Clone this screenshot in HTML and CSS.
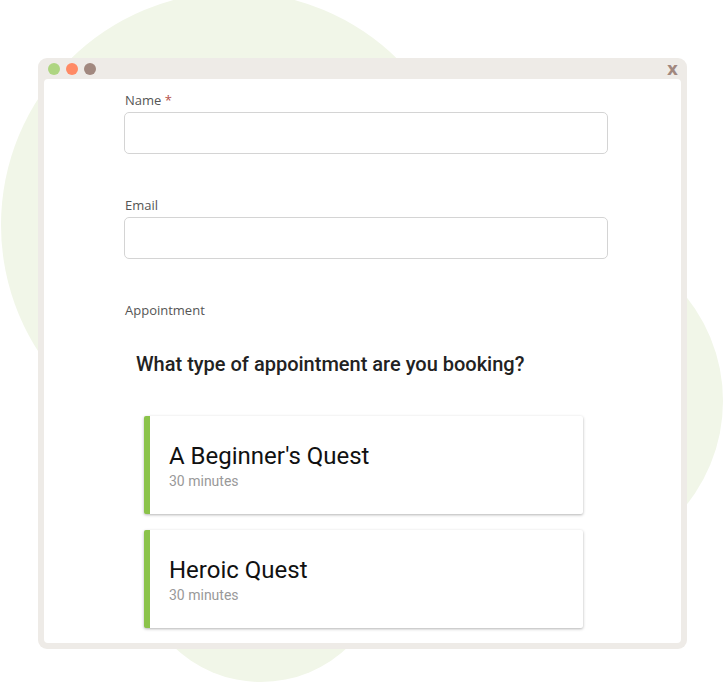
FILE: index.html
```html
<!DOCTYPE html>
<html lang="en">
<head>
    <meta charset="UTF-8">
    <meta name="viewport" content="width=device-width, initial-scale=1.0">
    <title>Booking</title>
    <link rel="stylesheet" href="styles.css">
</head>
<body>
    <div class="stage">
        <div class="blob blob-big"></div>
        <div class="blob blob-right"></div>
        <div class="blob blob-bottom"></div>

        <div class="window">
            <div class="titlebar">
                <div class="dots">
                    <span class="dot green"></span>
                    <span class="dot orange"></span>
                    <span class="dot brown"></span>
                </div>
                <span class="close">x</span>
            </div>

            <div class="content">
                <form class="booking-form">
                    <div class="form-group">
                        <label for="name">Name <span class="req">*</span></label>
                        <input type="text" id="name" name="name">
                    </div>

                    <div class="form-group">
                        <label for="email">Email</label>
                        <input type="text" id="email" name="email">
                    </div>

                    <div class="form-group">
                        <label>Appointment</label>
                    </div>

                    <h2 class="question">What type of appointment are you booking?</h2>

                    <div class="cards">
                        <div class="card">
                            <div class="card-title">A Beginner's Quest</div>
                            <div class="card-time">30 minutes</div>
                        </div>
                        <div class="card">
                            <div class="card-title">Heroic Quest</div>
                            <div class="card-time">30 minutes</div>
                        </div>
                    </div>
                </form>
            </div>
        </div>
    </div>
</body>
</html>
```

FILE: styles.css
```css
body {
    margin: 0;
    padding: 0;
    background-color: #ffffff;
    font-family: "Open Sans", sans-serif;
}

.stage {
    position: relative;
    width: 726px;
    height: 684px;
    overflow: hidden;
    padding-top: 58px;
    box-sizing: border-box;
}

.blob {
    position: absolute;
    background-color: #f1f6e8;
    border-radius: 50%;
}

.blob-big {
    left: 1px;
    top: -8px;
    width: 466px;
    height: 466px;
}

.blob-right {
    left: 391px;
    top: 235px;
    width: 332px;
    height: 332px;
}

.blob-bottom {
    left: 135px;
    top: 430px;
    width: 252px;
    height: 252px;
}

.window {
    position: relative;
    margin-left: 38px;
    width: 649px;
    height: 591px;
    background-color: #eeebe7;
    border-radius: 9px;
    padding: 0 6px 6px 6px;
    box-sizing: border-box;
    display: flex;
    flex-direction: column;
}

.titlebar {
    height: 21px;
    display: flex;
    align-items: center;
    justify-content: space-between;
    flex-shrink: 0;
}

.dots {
    display: flex;
    gap: 6px;
    padding-left: 4px;
    padding-top: 1px;
}

.dot {
    width: 12px;
    height: 12px;
    border-radius: 50%;
}

.dot.green { background-color: #aed581; }
.dot.orange { background-color: #ff8a65; }
.dot.brown { background-color: #a1887f; }

.close {
    font-family: "DejaVu Sans", sans-serif;
    font-weight: bold;
    font-size: 17px;
    color: #a1887f;
    padding-right: 3px;
    padding-top: 1px;
    line-height: 1;
}

.content {
    flex: 1;
    background-color: #ffffff;
    border-radius: 4px;
    overflow: hidden;
}

.booking-form {
    padding: 12px 0 0 80px;
}

.form-group {
    margin-bottom: 42px;
}

label {
    display: block;
    font-size: 13px;
    color: #555555;
    line-height: 18px;
    margin-bottom: 3px;
    padding-left: 1px;
}

.req {
    color: #b5504a;
}

input[type="text"] {
    display: block;
    width: 484px;
    height: 42px;
    box-sizing: border-box;
    border: 1px solid #d4d4d4;
    border-radius: 5px;
    padding: 8px 10px;
    font-size: 14px;
}

.question {
    font-family: Roboto, sans-serif;
    font-weight: 500;
    font-size: 20px;
    color: #222222;
    margin: -9px 0 0 12px;
    line-height: 24px;
}

.cards {
    margin: 40px 0 0 20px;
    display: flex;
    flex-direction: column;
    gap: 16px;
}

.card {
    width: 439px;
    height: 98px;
    box-sizing: border-box;
    background-color: #ffffff;
    border-left: 6px solid #8bc34a;
    border-radius: 2px;
    box-shadow: 0 1px 3px rgba(0, 0, 0, 0.3);
    padding: 26px 0 0 19px;
    font-family: Roboto, sans-serif;
}

.card-title {
    font-size: 24px;
    color: #111111;
    line-height: 28px;
}

.card-time {
    font-size: 14px;
    color: #999999;
    line-height: 18px;
    margin-top: 2px;
}
```
